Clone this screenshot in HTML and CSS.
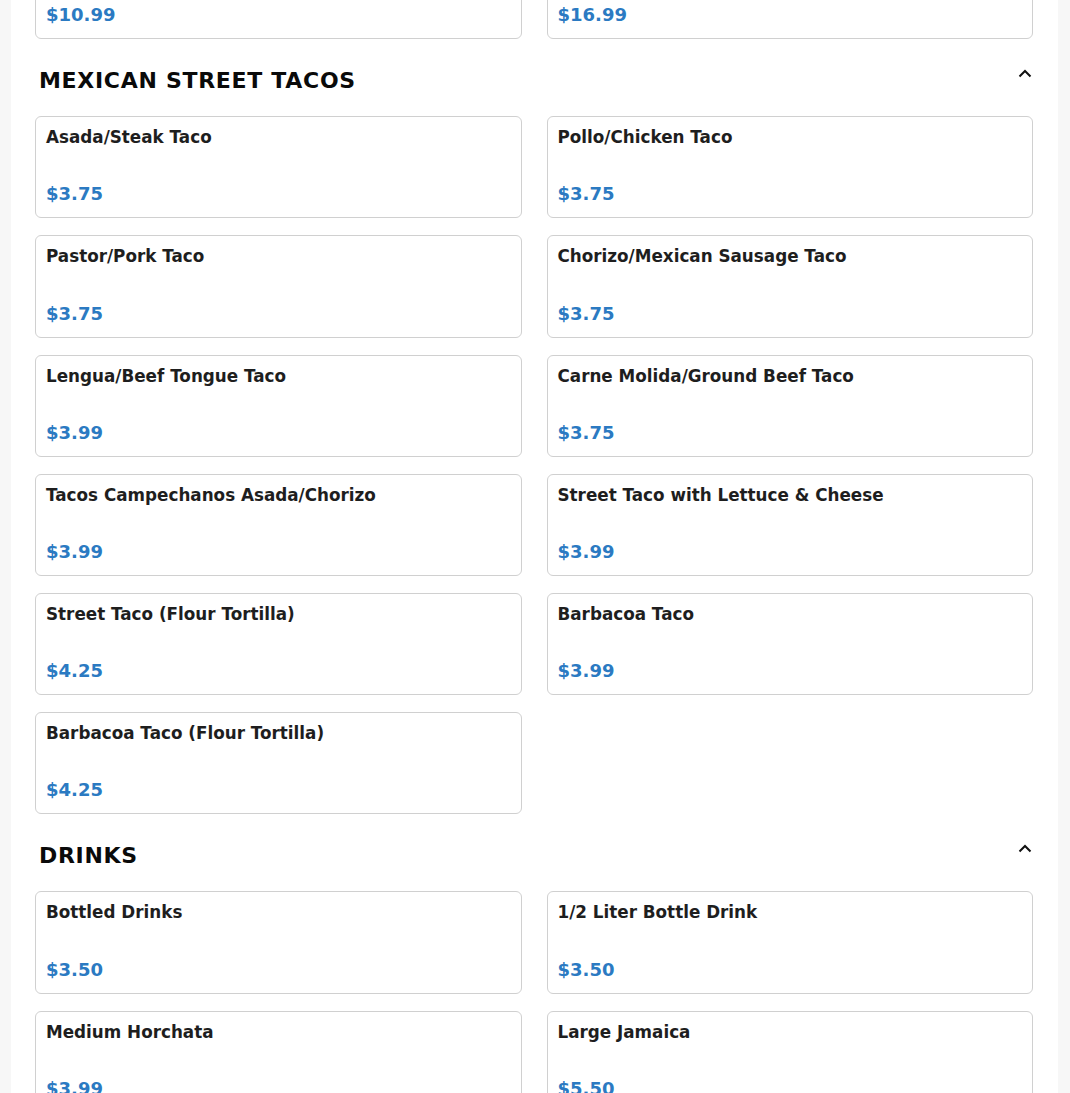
FILE: index.html
```html
<!DOCTYPE html>
<html lang="en">
<head>
<meta charset="utf-8">
<title>Menu</title>
<link rel="stylesheet" href="styles.css">
</head>
<body>
<main class="menu">
  <div class="grid grid-top">
    <div class="card"><div class="card-title"></div><div class="card-price">$10.99</div></div>
    <div class="card"><div class="card-title"></div><div class="card-price">$16.99</div></div>
  </div>

  <section class="section">
    <div class="section-head">
      <h2 class="section-title">MEXICAN STREET TACOS</h2>
      <svg class="chev" width="16" height="26" viewBox="0 0 16 26"><path d="M2.5 8.5 L8 3 L13.5 8.5" fill="none" stroke="#111" stroke-width="2"/></svg>
    </div>
    <div class="grid">
      <div class="card"><div class="card-title">Asada/Steak Taco</div><div class="card-price">$3.75</div></div>
      <div class="card"><div class="card-title">Pollo/Chicken Taco</div><div class="card-price">$3.75</div></div>
      <div class="card"><div class="card-title">Pastor/Pork Taco</div><div class="card-price">$3.75</div></div>
      <div class="card"><div class="card-title">Chorizo/Mexican Sausage Taco</div><div class="card-price">$3.75</div></div>
      <div class="card"><div class="card-title">Lengua/Beef Tongue Taco</div><div class="card-price">$3.99</div></div>
      <div class="card"><div class="card-title">Carne Molida/Ground Beef Taco</div><div class="card-price">$3.75</div></div>
      <div class="card"><div class="card-title">Tacos Campechanos Asada/Chorizo</div><div class="card-price">$3.99</div></div>
      <div class="card"><div class="card-title">Street Taco with Lettuce &amp; Cheese</div><div class="card-price">$3.99</div></div>
      <div class="card"><div class="card-title">Street Taco (Flour Tortilla)</div><div class="card-price">$4.25</div></div>
      <div class="card"><div class="card-title">Barbacoa Taco</div><div class="card-price">$3.99</div></div>
      <div class="card"><div class="card-title">Barbacoa Taco (Flour Tortilla)</div><div class="card-price">$4.25</div></div>
    </div>
  </section>

  <section class="section">
    <div class="section-head">
      <h2 class="section-title">DRINKS</h2>
      <svg class="chev" width="16" height="26" viewBox="0 0 16 26"><path d="M2.5 8.5 L8 3 L13.5 8.5" fill="none" stroke="#111" stroke-width="2"/></svg>
    </div>
    <div class="grid">
      <div class="card"><div class="card-title">Bottled Drinks</div><div class="card-price">$3.50</div></div>
      <div class="card"><div class="card-title">1/2 Liter Bottle Drink</div><div class="card-price">$3.50</div></div>
      <div class="card"><div class="card-title">Medium Horchata</div><div class="card-price">$3.99</div></div>
      <div class="card"><div class="card-title">Large Jamaica</div><div class="card-price">$5.50</div></div>
    </div>
  </section>
</main>
</body>
</html>
```

FILE: styles.css
```css
html, body {
  margin: 0;
  padding: 0;
}
body {
  background: #f7f7f7;
  font-family: "DejaVu Sans", Verdana, sans-serif;
  color: #222;
  padding: 0 12px 0 11px;
  overflow: hidden;
}
.menu {
  background: #fff;
  padding: 0 25px 40px 24px;
  min-height: 1200px;
}
.grid {
  display: grid;
  grid-template-columns: 1fr 1fr;
  column-gap: 25px;
  row-gap: 17px;
}
.grid-top {
  margin-top: -63px;
}
.card {
  box-sizing: border-box;
  height: 102.2px;
  border: 1px solid #d0d0d0;
  border-radius: 6px;
  padding: 10px 10px 12px;
  display: flex;
  flex-direction: column;
  justify-content: space-between;
  background: #fff;
}
.card-title {
  font-size: 16.8px;
  font-weight: bold;
  line-height: 20px;
  color: #1e1e1e;
  min-height: 20px;
}
.card-price {
  font-size: 18px;
  font-weight: bold;
  line-height: 22px;
  color: #2b7ac2;
}
.section-head {
  display: flex;
  align-items: flex-start;
  justify-content: space-between;
  padding: 29px 0 22px 4px;
}
.section-title {
  margin: 0;
  font-size: 22px;
  line-height: 26px;
  font-weight: bold;
  letter-spacing: 0.7px;
  color: #0a0a0a;
}
.chev {
  display: block;
  flex: none;
}
```
